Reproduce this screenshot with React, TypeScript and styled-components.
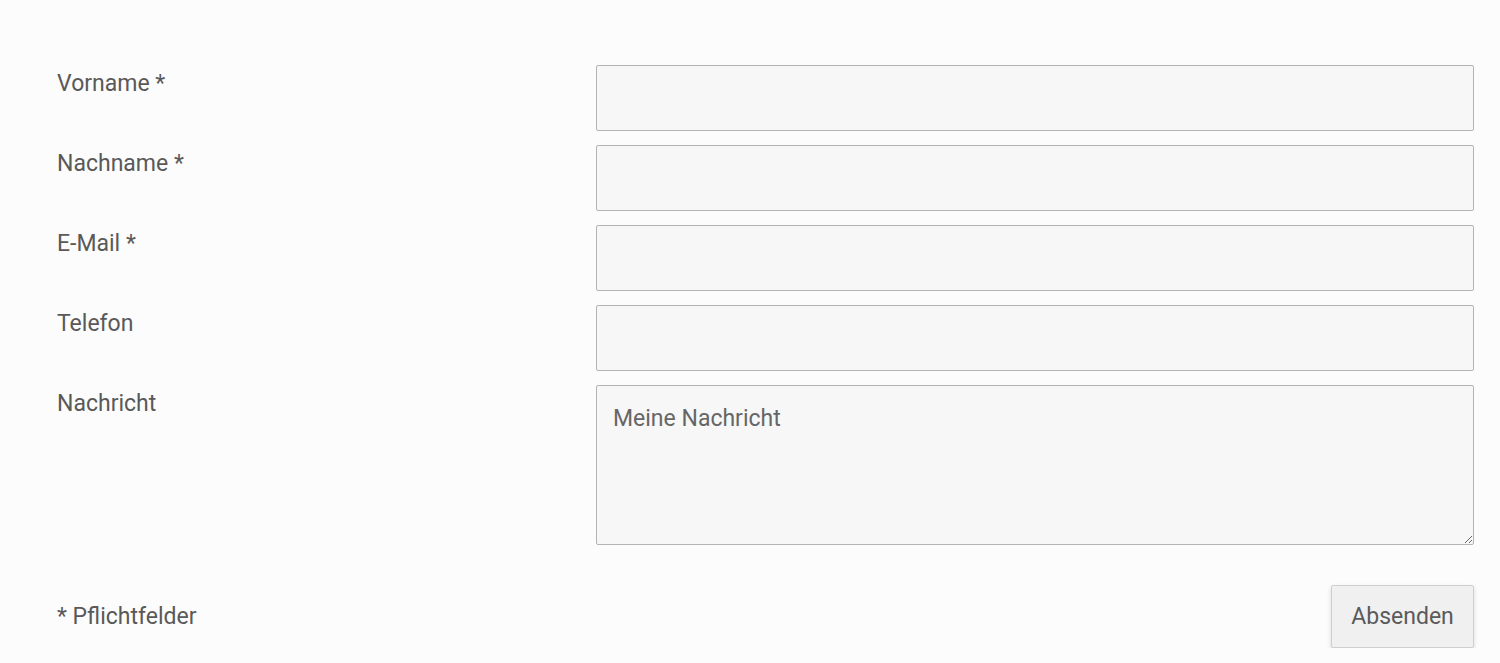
import React from "react";
import styled, { createGlobalStyle } from "styled-components";

const GlobalStyle = createGlobalStyle`
  html, body {
    margin: 0;
    padding: 0;
    background: #fcfcfc;
    font-family: Roboto, "Liberation Sans", sans-serif;
    color: #5a5a5a;
  }
  * { box-sizing: border-box; }
`;

const Form = styled.form`
  padding: 65px 26px 0 57px;
  display: flex;
  flex-direction: column;
  gap: 14px;
`;

const Row = styled.div`
  display: grid;
  grid-template-columns: 539px 1fr;
  align-items: start;
`;

const Label = styled.label`
  font-size: 23px;
  line-height: 33px;
  padding-top: 2px;
  color: #595959;
`;

const Input = styled.input`
  display: block;
  width: 100%;
  height: 66px;
  background: #f7f7f7;
  border: 1px solid #b3b3b3;
  border-radius: 2px;
  padding: 0 16px;
  font: 23px Roboto, "Liberation Sans", sans-serif;
  color: #5a5a5a;
  outline: none;
`;

const TextArea = styled.textarea`
  display: block;
  width: 100%;
  height: 160px;
  background: #f7f7f7;
  border: 1px solid #b3b3b3;
  border-radius: 2px;
  padding: 16px 16px;
  font: 23px/33px Roboto, "Liberation Sans", sans-serif;
  color: #5a5a5a;
  outline: none;
  resize: vertical;
  &::placeholder {
    color: #666;
    opacity: 1;
  }
`;

const Footer = styled.div`
  display: flex;
  justify-content: space-between;
  align-items: center;
  margin-top: 26px;
`;

const Note = styled.span`
  font-size: 23px;
  color: #595959;
`;

const Button = styled.button`
  width: 143px;
  height: 63px;
  background: #f0f0f0;
  border: 1px solid #cfcfcf;
  border-radius: 2px;
  box-shadow: 0 2px 4px rgba(0, 0, 0, 0.15);
  font: 23px Roboto, "Liberation Sans", sans-serif;
  color: #5a5a5a;
  cursor: pointer;
`;

const fields = [
  { id: "vorname", label: "Vorname *" },
  { id: "nachname", label: "Nachname *" },
  { id: "email", label: "E-Mail *" },
  { id: "telefon", label: "Telefon" },
];

export default function App() {
  return (
    <>
      <GlobalStyle />
      <Form onSubmit={(e) => e.preventDefault()}>
        {fields.map((f) => (
          <Row key={f.id}>
            <Label htmlFor={f.id}>{f.label}</Label>
            <Input id={f.id} type="text" />
          </Row>
        ))}
        <Row>
          <Label htmlFor="nachricht">Nachricht</Label>
          <TextArea id="nachricht" placeholder="Meine Nachricht" />
        </Row>
        <Footer>
          <Note>* Pflichtfelder</Note>
          <Button type="submit">Absenden</Button>
        </Footer>
      </Form>
    </>
  );
}
